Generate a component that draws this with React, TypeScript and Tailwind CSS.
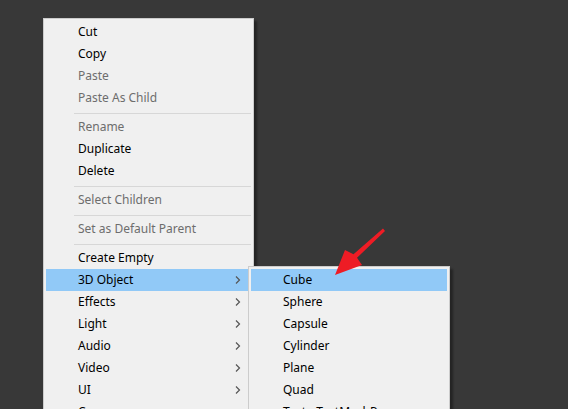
import React from "react";

type Entry =
  | { kind: "item"; label: string; disabled?: boolean; sub?: boolean; active?: boolean }
  | { kind: "sep" };

const mainItems: Entry[] = [
  { kind: "item", label: "Cut" },
  { kind: "item", label: "Copy" },
  { kind: "item", label: "Paste", disabled: true },
  { kind: "item", label: "Paste As Child", disabled: true },
  { kind: "sep" },
  { kind: "item", label: "Rename", disabled: true },
  { kind: "item", label: "Duplicate" },
  { kind: "item", label: "Delete" },
  { kind: "sep" },
  { kind: "item", label: "Select Children", disabled: true },
  { kind: "sep" },
  { kind: "item", label: "Set as Default Parent", disabled: true },
  { kind: "sep" },
  { kind: "item", label: "Create Empty" },
  { kind: "item", label: "3D Object", sub: true, active: true },
  { kind: "item", label: "Effects", sub: true },
  { kind: "item", label: "Light", sub: true },
  { kind: "item", label: "Audio", sub: true },
  { kind: "item", label: "Video", sub: true },
  { kind: "item", label: "UI", sub: true },
  { kind: "item", label: "Camera" },
];

const objectItems: Entry[] = [
  { kind: "item", label: "Cube", active: true },
  { kind: "item", label: "Sphere" },
  { kind: "item", label: "Capsule" },
  { kind: "item", label: "Cylinder" },
  { kind: "item", label: "Plane" },
  { kind: "item", label: "Quad" },
  { kind: "item", label: "Text - TextMeshPro" },
  { kind: "sep" },
  { kind: "item", label: "Ragdoll..." },
];

const Chevron = () => (
  <svg width="6" height="8" viewBox="0 0 6 8" className="shrink-0">
    <path d="M1 0.5 L4.5 4 L1 7.5" fill="none" stroke="#555" strokeWidth="1.2" />
  </svg>
);

const MenuList: React.FC<{ entries: Entry[] }> = ({ entries }) => (
  <div className="flex flex-col p-[2px]">
    {entries.map((e, i) =>
      e.kind === "sep" ? (
        <div key={i} className="ml-[28px] mt-[4px] mb-[2px] h-px bg-[#d7d7d7]" />
      ) : (
        <div
          key={i}
          className={`flex h-[22px] items-center pl-[32px] pr-[10px] ${
            e.active ? "bg-[#91c9f7]" : ""
          } ${e.disabled ? "text-[#6d6d6d]" : "text-black"}`}
        >
          <span className="flex-1 whitespace-nowrap">{e.label}</span>
          {e.sub && <Chevron />}
        </div>
      )
    )}
  </div>
);

export default function App() {
  return (
    <div
      className="relative h-[409px] w-[568px] overflow-hidden bg-[#383838] text-[12px]"
      style={{ fontFamily: '"Noto Sans", "Liberation Sans", sans-serif' }}
    >
      {/* context menu */}
      <div className="absolute left-[43px] top-[18px] w-[211px] border border-[#cccccc] bg-[#f0f0f0] shadow-[3px_3px_2px_rgba(0,0,0,0.35)]">
        <MenuList entries={mainItems} />
      </div>

      {/* 3D Object submenu */}
      <div className="absolute left-[248px] top-[266px] w-[202px] border border-[#cccccc] bg-[#f0f0f0] shadow-[3px_3px_2px_rgba(0,0,0,0.35)]">
        <MenuList entries={objectItems} />
      </div>

      {/* pointer arrow */}
      <svg className="pointer-events-none absolute left-0 top-0" width="568" height="409">
        <path
          d="M383 228.5 L385 231 L357 257.8 L362 265 L335 275 L345 250 L353.5 254.2 Z"
          fill="#ee1c25"
        />
      </svg>
    </div>
  );
}
